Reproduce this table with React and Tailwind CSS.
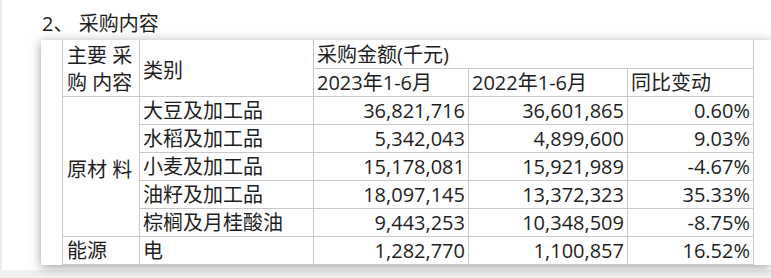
import React from "react";

const rows = [
  ["大豆及加工品", "36,821,716", "36,601,865", "0.60%"],
  ["水稻及加工品", "5,342,043", "4,899,600", "9.03%"],
  ["小麦及加工品", "15,178,081", "15,921,989", "-4.67%"],
  ["油籽及加工品", "18,097,145", "13,372,323", "35.33%"],
  ["棕榈及月桂酸油", "9,443,253", "10,348,509", "-8.75%"],
];

const cell = "border-r border-b border-[#c8c8c8] flex items-center px-[3px] whitespace-nowrap";

export default function App() {
  return (
    <div
      className="w-[771px] h-[278px] bg-[#efefef] overflow-hidden text-[#1e1e1e] text-[20px]"
      style={{ fontFamily: '"Open Sans", "Noto Sans CJK SC", sans-serif' }}
    >
      <div className="h-[270px] bg-white border-l-2 border-[#ebebeb]">
        <div className="pt-[10px] pl-[40px] leading-[28px] h-[38px]">2、 采购内容</div>
        <div className="ml-[39px] mt-[2px] bg-white pl-[21px] shadow-[0_2px_10px_rgba(0,0,0,0.4)]">
          <div className="grid grid-cols-[77px_174px_155px_159px_126px] grid-rows-[29px_repeat(7,28px)] w-[692px] border-l border-[#c8c8c8] leading-[27px]">
            <div className={`${cell} row-span-2 flex-col items-start justify-center pl-[4px] pt-[2px]`}>
              <span>主要 采</span>
              <span>购 内容</span>
            </div>
            <div className={`${cell} row-span-2 pt-[4px]`}>类别</div>
            <div className={`${cell} col-span-3`}>采购金额(千元)</div>
            <div className={cell}>2023年1-6月</div>
            <div className={cell}>2022年1-6月</div>
            <div className={cell}>同比变动</div>
            <div className={`${cell} row-span-5 pl-[4px] pt-[6px]`}>原材 料</div>
            {rows.map((r) => (
              <React.Fragment key={r[0]}>
                <div className={cell}>{r[0]}</div>
                <div className={`${cell} justify-end`}>{r[1]}</div>
                <div className={`${cell} justify-end`}>{r[2]}</div>
                <div className={`${cell} justify-end`}>{r[3]}</div>
              </React.Fragment>
            ))}
            <div className={`${cell} pl-[4px]`}>能源</div>
            <div className={cell}>电</div>
            <div className={`${cell} justify-end`}>1,282,770</div>
            <div className={`${cell} justify-end`}>1,100,857</div>
            <div className={`${cell} justify-end`}>16.52%</div>
          </div>
        </div>
      </div>
    </div>
  );
}
